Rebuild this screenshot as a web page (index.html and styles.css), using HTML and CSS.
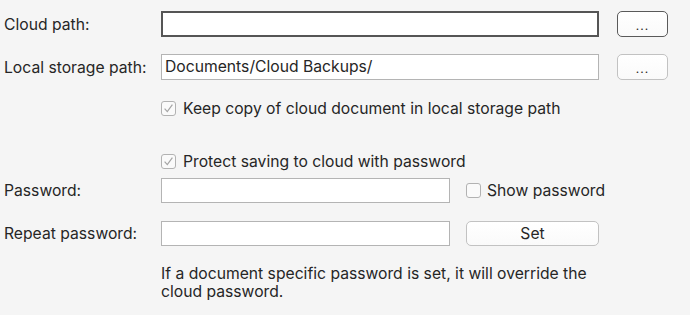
FILE: index.html
```html
<!DOCTYPE html>
<html>
<head>
<meta charset="utf-8">
<link rel="stylesheet" href="styles.css">
</head>
<body>
<div class="form">
  <div class="row r1">
    <span class="label">Cloud path:</span>
    <div class="input wide focus"></div>
    <div class="btn small dark">...</div>
  </div>
  <div class="row r2">
    <span class="label">Local storage path:</span>
    <div class="input wide">Documents/Cloud Backups/</div>
    <div class="btn small">...</div>
  </div>
  <div class="row r3">
    <span class="label"></span>
    <span class="check on"><svg viewBox="0 0 15 15" width="15" height="15"><path d="M3.6 7.6 L6.3 10.6 L11.4 3.6" fill="none" stroke="#a4a4a4" stroke-width="1.2"/></svg></span>
    <span class="ctext">Keep copy of cloud document in local storage path</span>
  </div>
  <div class="row r4">
    <span class="label"></span>
    <span class="check on"><svg viewBox="0 0 15 15" width="15" height="15"><path d="M3.6 7.6 L6.3 10.6 L11.4 3.6" fill="none" stroke="#a4a4a4" stroke-width="1.2"/></svg></span>
    <span class="ctext">Protect saving to cloud with password</span>
  </div>
  <div class="row r5">
    <span class="label">Password:</span>
    <div class="input narrow"></div>
    <span class="check"></span>
    <span class="ctext">Show password</span>
  </div>
  <div class="row r6">
    <span class="label">Repeat password:</span>
    <div class="input narrow"></div>
    <div class="btn set">Set</div>
  </div>
  <p class="note">If a document specific password is set, it will override the<br>cloud password.</p>
</div>
</body>
</html>
```
FILE: styles.css
```css
html, body {
  margin: 0;
  padding: 0;
  background: #f5f5f5;
}
body {
  font-family: Inter, "Liberation Sans", Arial, sans-serif;
  font-size: 15.7px;
  color: #262626;
}
.form {
  padding: 11px 0 0 4px;
  display: flex;
  flex-direction: column;
}
.row {
  display: flex;
  align-items: center;
  height: 26px;
}
.label {
  width: 157px;
  flex: none;
}
.input {
  box-sizing: border-box;
  height: 26px;
  background: #fff;
  border: 1.5px solid #b4b4b4;
  padding: 0 0 0 3px;
  line-height: 23px;
  color: #262626;
  flex: none;
}
.input.wide { width: 438px; }
.input.narrow { width: 289px; height: 25px; }
.input.focus { border: 2px solid #555; }
.btn {
  box-sizing: border-box;
  height: 26px;
  border: 1px solid #c2c2c2;
  border-radius: 5px;
  background: linear-gradient(#fff, #fafafa);
  display: flex;
  align-items: center;
  justify-content: center;
  flex: none;
}
.btn.small {
  width: 51px;
  margin-left: 18px;
  font-size: 12px;
  letter-spacing: 1px;
  padding-top: 2px;
}
.btn.dark { border: 1.5px solid #5a5a5a; }
.btn.set {
  width: 133px;
  height: 25px;
  margin-left: 16px;
}
.check {
  box-sizing: border-box;
  width: 15px;
  height: 15px;
  border: 1px solid #b2b2b2;
  border-radius: 3px;
  background: #fafafa;
  flex: none;
  display: flex;
}
.check svg { display: block; margin: -1px; }
.ctext { margin-left: 7px; }
.r2 { margin-top: 17px; }
.r3 { margin-top: 15px; height: 26px; }
.r4 { margin-top: 27px; height: 26px; }
.r5 { margin-top: 4px; height: 25px; }
.r5 .check { margin-left: 16px; }
.r5 .ctext { margin-left: 6px; }
.r6 { margin-top: 18px; height: 25px; }
.note {
  margin: 19px 0 0 157px;
  line-height: 18px;
}
```
